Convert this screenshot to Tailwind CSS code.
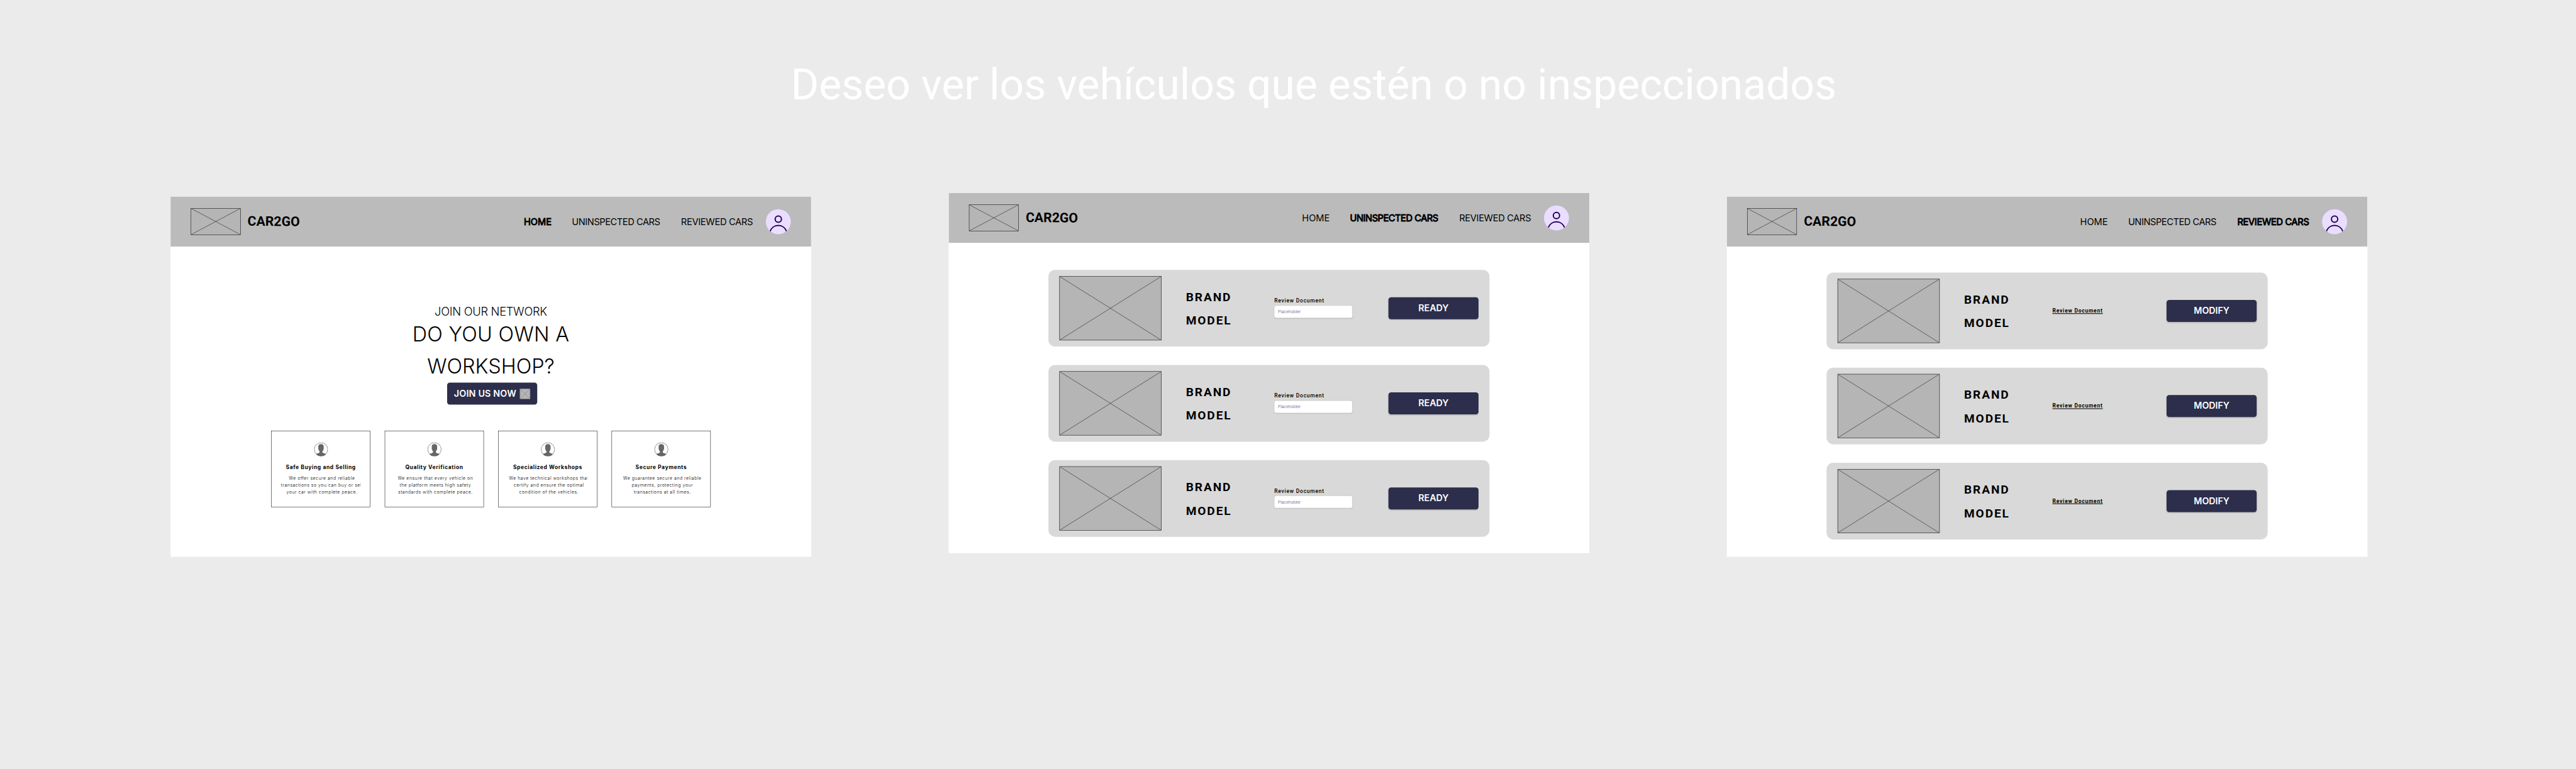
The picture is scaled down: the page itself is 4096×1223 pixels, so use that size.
<!DOCTYPE html>
<html lang="es">
<head>
<meta charset="utf-8">
<title>CAR2GO</title>
<script src="https://cdn.jsdelivr.net/npm/@tailwindcss/browser@4"></script>
</head>
<body class="bg-[#ebebeb] overflow-hidden">
<div class="w-[4096px] h-[1223px] overflow-hidden">
<div id="board" class="w-[7720px] h-[2305px] origin-top-left scale-[0.53057] pt-[179px] font-['Inter',sans-serif] text-black bg-[#ebebeb]"></div>
</div>
<script>
// Crossed box that stands for an image
const cross = (cls, stroke) => `<svg class="${cls} block shrink-0 bg-[#b5b5b5]" preserveAspectRatio="none" viewBox="0 0 100 100"><path d="M0 0L100 100M100 0L0 100" fill="none" stroke="${stroke}" vector-effect="non-scaling-stroke" stroke-width="1"/></svg>`;

const avatar = `<svg class="w-[75px] h-[75px] block ml-[39px] rounded-full bg-[#EADDFF]" viewBox="0 0 75 75"><g fill="none" stroke="#21005D" stroke-width="3.75"><circle cx="37.5" cy="30" r="9.4"/><path d="M12.2 68C16.2 56.500 26 48.900 37.500 48.900S58.800 56.500 62.800 68"/></g></svg>`;

const portrait = `<svg class="w-[42px] h-[42px] block mx-auto rounded-full" viewBox="0 0 42 42"><path fill="#666" d="M21 5.300c5 0 8.200 2.700 8.200 7.500 0 2-.3 3.900-.2 5.600.4.500.2 2.300-.7 3.100-.8 2.500-1.800 4.100-3 5.400v3.200c1.500 2.200 6.300 2.700 9.700 4.700 2 1.200 2 7.200 2 7.200H5s0-6 2-7.200c3.400-2 8.200-2.500 9.700-4.700v-3.200c-1.200-1.300-2.200-2.900-3-5.400-.9-.8-1.100-2.600-.7-3.100.1-1.700-.2-3.600-.2-5.600 0-4.800 3.200-7.500 8.200-7.500z"/><circle cx="21" cy="21" r="20.200" fill="none" stroke="#666" stroke-width="1.500"/></svg>`;

const nav = (label, cls, on) => `<span class="${cls} whitespace-nowrap ${on ? '[-webkit-text-stroke:1.8px_black]' : ''}">${label}</span>`;

const header = (active) => `<header class="h-[150px] bg-[#bbbbbb] flex items-center pl-[61px]">
  ${cross('w-[149px] h-[80px] border border-black', '#111')}
  <span class="ml-[21px] w-[160px] font-['Roboto',sans-serif] font-bold text-[40px] leading-[48px] rotate-[0.6deg]">CAR2GO</span>
  <nav class="ml-auto flex items-center pr-[61px] text-[27.500px] leading-[40px] font-normal">
    ${nav('HOME', 'mr-[61px]', active === 0)}
    ${nav('UNINSPECTED CARS', 'mr-[63px] tracking-[-0.029em]', active === 1)}
    ${nav('REVIEWED CARS', 'tracking-[-0.02em]', active === 2)}
    ${avatar}
  </nav>
</header>`;

const card = (title, lines) => `<article class="w-[297px] h-[229px] border border-black pt-[34px]">
  ${portrait}
  <h3 class="mt-[20px] text-center text-[16px] leading-[24px] font-bold tracking-[0.071em]">${title}</h3>
  <div class="w-[267px] overflow-hidden mt-[12px]"><p class="w-[302px] text-center whitespace-nowrap text-[13px] leading-[20px] font-light tracking-[0.079em]">${lines.join('<br>')}</p></div>
</article>`;

const row = (doc, label) => `<section class="w-[1322px] h-[230px] rounded-[20px] bg-[#d9d9d9] flex items-start pl-[33px]">
  ${cross('mt-[19px] w-[305.500px] h-[192px] border border-black', '#111')}
  <div class="mt-[46px] ml-[73.500px] w-[265px] font-['Roboto',sans-serif] font-bold text-[36px] leading-[71px] tracking-[0.1em]"><div>BRAND</div><div>MODEL</div></div>
  <div class="w-[234px]">${doc}</div>
  <button class="mt-[82px] ml-[108px] w-[270px] h-[66px] rounded-[8px] bg-[#2c2e4b] shadow-[0_2px_2px_rgba(0,0,0,0.12)] text-white font-semibold text-[27px] leading-[66px] tracking-[-0.006em]">${label}</button>
</section>`;

const upload = `<label class="mt-[83.500px] block whitespace-nowrap font-['Roboto',sans-serif] font-medium text-[16px] leading-[20px] tracking-[0.09em]">Review Document</label><div class="mt-[3.500px] h-[37px] rounded-[5px] bg-white border border-[#ececec] shadow-[0_1px_3px_rgba(0,0,0,0.12)] pl-[10px] text-[12.800px] leading-[35px] tracking-[-0.026em] text-[#7c84a3]">Placeholder</div>`;
const link = `<a class="mt-[105px] block whitespace-nowrap font-['Roboto',sans-serif] font-bold text-[16px] leading-[20px] underline underline-offset-[2px] decoration-[1.500px] tracking-[0.091em]">Review Document</a>`;

const frame = (cls, active, body) => `<div class="w-[1920px] h-[1080px] shrink-0 bg-white overflow-hidden ${cls}">${header(active)}${body}</div>`;
const rows = (cls, r) => `<div class="pl-[299px] flex flex-col gap-[55px] ${cls}">${r}${r}${r}</div>`;

const home = `<div class="pt-[177.500px] text-center font-[350]">
  <p class="text-[34.400px] leading-[36px] tracking-[-0.015em]">JOIN OUR NETWORK</p>
  <h2 class="text-[61px] leading-[96px]"><span class="tracking-[0.009em]">DO YOU OWN A</span><br>WORKSHOP?</h2>
  <button class="mt-[2.500px] ml-[828.500px] w-[270px] h-[66px] rounded-[8px] bg-[#2c2e4b] flex items-center pl-[21px] text-white font-semibold text-[27px]"><span class="w-[197.500px] text-left whitespace-nowrap tracking-[0.011em]">JOIN US NOW</span>${cross('w-[31px] h-[31px] border border-[#777]', '#777')}</button>
</div>
<div class="mt-[78px] pl-[302px] flex gap-[43px]">
  ${card('Safe Buying and Selling', ['We offer secure and reliable', 'transactions so you can buy or sell', 'your car with complete peace.'])}
  ${card('Quality Verification', ['We ensure that every vehicle on', 'the platform meets high safety', 'standards with complete peace.'])}
  ${card('Specialized Workshops', ['We have technical workshops that', 'certify and ensure the optimal', 'condition of the vehicles.'])}
  ${card('Secure Payments', ['We guarantee secure and reliable', 'payments, protecting your', 'transactions at all times.'])}
</div>`;

document.getElementById('board').innerHTML = `
<h1 class="pl-[2370px] h-[150px] leading-[150px] text-[128px] font-['Roboto',sans-serif] text-white whitespace-nowrap">Deseo ver los vehículos que estén o no inspeccionados</h1>
<main class="mt-[260px] pl-[511px] flex gap-[412px]">
  ${frame('', 0, home)}
  ${frame('-mt-[11px]', 1, rows('pt-[80.500px]', row(upload, 'READY')))}
  ${frame('', 2, rows('pt-[77.500px]', row(link, 'MODIFY')))}
</main>`;
</script>
</body>
</html>
